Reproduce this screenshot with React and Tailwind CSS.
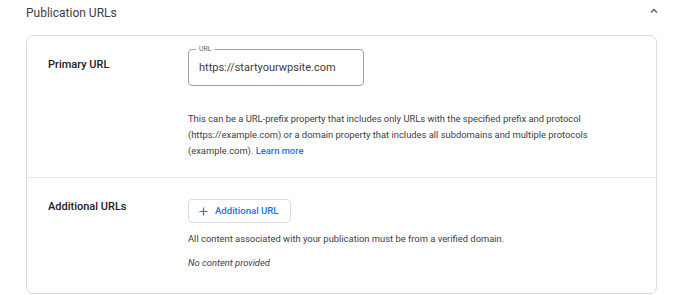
import React from "react";

export default function App() {
  return (
    <div
      className="w-[680px] h-[295px] bg-white overflow-hidden text-[#3c4043]"
      style={{ fontFamily: "Roboto, 'Liberation Sans', sans-serif" }}
    >
      <div className="flex items-center justify-between pl-[26px] pr-[20px] h-[26px]">
        <h2 className="text-[12px] leading-[18px] text-[#3c4043]">Publication URLs</h2>
        <svg width="12" height="12" viewBox="0 0 12 12" className="mb-[4px]">
          <path d="M3 7.5 L6 4.5 L9 7.5" fill="none" stroke="#5f6368" strokeWidth="1.5" />
        </svg>
      </div>

      <div className="ml-[26px] mt-[9px] w-[631px] h-[259px] border border-[#dadce0] rounded-[7px]">
        {/* Primary URL row */}
        <div className="flex pt-[13px] pb-[18px] border-b border-[#e8eaed]">
          <div className="w-[161px] pl-[21px] pt-[8px] text-[11px] leading-[16px] font-medium text-[#202124]">
            Primary URL
          </div>
          <div className="flex flex-col">
            <div className="relative w-[176px] h-[37px] border border-[#9aa0a6] rounded-[4px] flex items-center pl-[10px]">
              <span className="absolute left-[7px] top-[-6px] bg-white px-[3px] text-[7px] leading-[10px] text-[#5f6368]">
                URL
              </span>
              <span className="text-[11px] text-[#3c4043] mt-[1px]">https://startyourwpsite.com</span>
            </div>
            <p className="mt-[25px] w-[420px] text-[9.4px] leading-[16px] text-[#3c4043]">
              This can be a URL-prefix property that includes only URLs with the specified prefix and protocol
              (https://example.com) or a domain property that includes all subdomains and multiple protocols
              (example.com). <span className="text-[#1a73e8] font-medium">Learn more</span>
            </p>
          </div>
        </div>

        {/* Additional URLs row */}
        <div className="flex pt-[21px]">
          <div className="w-[161px] pl-[21px] pt-[0px] text-[11px] leading-[16px] font-medium text-[#202124]">
            Additional URLs
          </div>
          <div className="flex flex-col">
            <button className="w-[103px] h-[24px] border border-[#dadce0] rounded-[4px] flex items-center pl-[10px] gap-[7px] text-[#1a73e8] text-[9.6px] font-medium whitespace-nowrap">
              <svg width="9" height="9" viewBox="0 0 10 10">
                <path d="M5 0.5 V9.5 M0.5 5 H9.5" stroke="#1a73e8" strokeWidth="1.3" />
              </svg>
              Additional URL
            </button>
            <p className="mt-[8px] text-[9.4px] leading-[16px] text-[#3c4043]">
              All content associated with your publication must be from a verified domain.
            </p>
            <p className="mt-[8px] text-[9.4px] leading-[16px] italic text-[#3c4043]">No content provided</p>
          </div>
        </div>
      </div>
    </div>
  );
}
